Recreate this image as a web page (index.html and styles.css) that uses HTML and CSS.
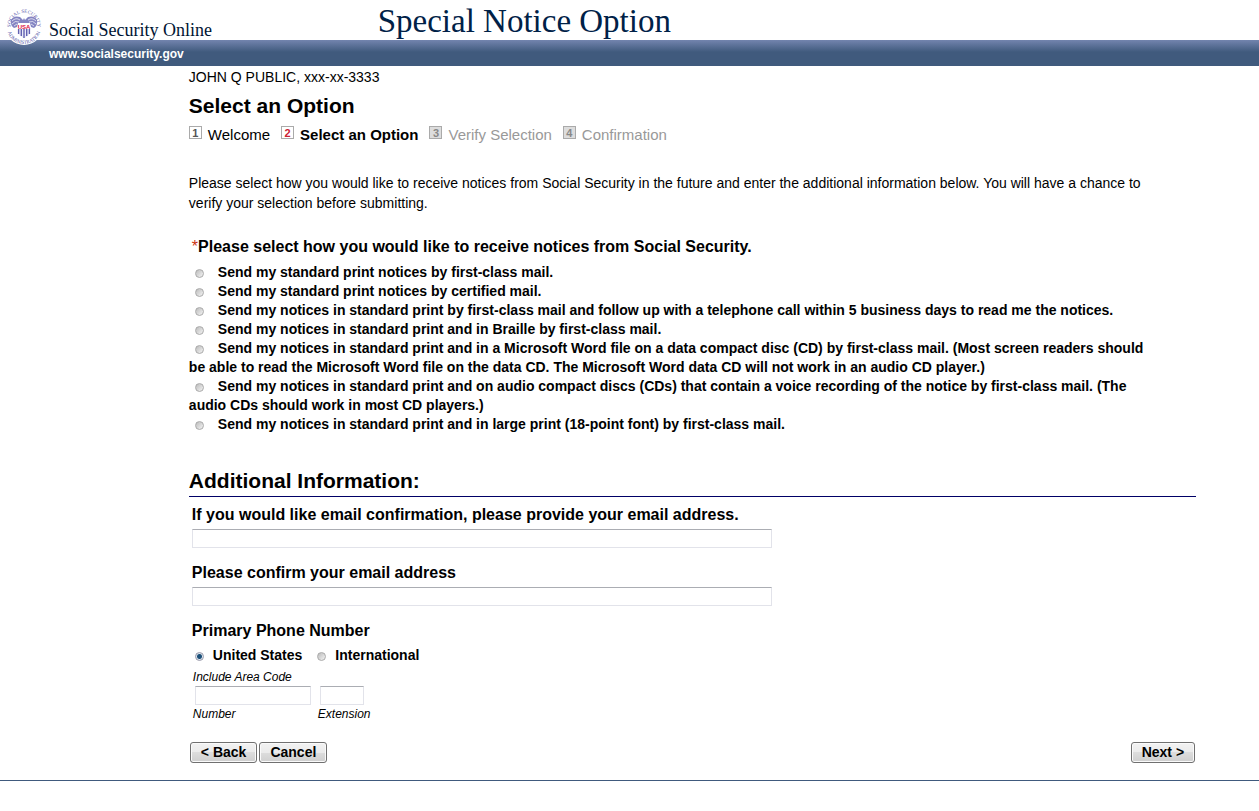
FILE: index.html
```html
<!DOCTYPE html>
<html lang="en">
    <head>
        <meta charset="utf-8">
        <title>Special Notice Option</title>
        <link rel="stylesheet" href="styles.css">
    </head>
    <body>
        <header class="header">
            <svg class="seal" viewBox="0 0 38 38" aria-hidden="true">
                <defs>
                    <path id="arc-top" d="M5.6 21 A13.5 13.5 0 1 1 32.4 21"/>
                    <path id="arc-bottom" d="M2 20 A17 17 0 0 0 36 20"/>
                </defs>
                <circle cx="19" cy="19" r="19" fill="#fff"/>
                <text class="seal-ring"><textPath href="#arc-top" startOffset="50%" text-anchor="middle">SOCIAL SECURITY</textPath></text>
                <text class="seal-ring"><textPath href="#arc-bottom" startOffset="50%" text-anchor="middle">ADMINISTRATION</textPath></text>
                <path d="M6 13 Q9 8 15 10 L18 13 L19 11 L20 13 L23 10 Q29 8 32 13 Q33 18 29 21 L26 20 L25 16 H13 L12 20 L9 21 Q5 18 6 13Z" fill="#8484c2"/>
                <path d="M7 14 Q11 10 15 13 M7 17 Q10 13 14 15 M9 19 L12 17 M31 14 Q27 10 23 13 M31 17 Q28 13 24 15 M29 19 L26 17" fill="none" stroke="#fff" stroke-width="0.7"/>
                <path d="M13 22 H25 V26 Q24 29 19 31 Q14 29 13 26Z" fill="#ececf8"/>
                <path d="M13.6 22 V27 M16.3 22 V29 M19 22 V31 M21.7 22 V29 M24.4 22 V27" stroke="#6262b2" stroke-width="1.4"/>
                <text class="seal-usa" x="19" y="21.5" text-anchor="middle">USA</text>
            </svg>
            <div class="header-top">
                <span class="site-name">Social Security Online</span>
                <h1 class="app-title">Special Notice Option</h1>
            </div>
            <div class="header-bar">
                <a href="#">www.socialsecurity.gov</a>
            </div>
        </header>

        <main class="content">
            <p class="user">JOHN Q PUBLIC, xxx-xx-3333</p>
            <h2 class="page-title">Select an Option</h2>
            <ol class="steps">
                <li class="step"><span class="step-number">1</span>Welcome</li>
                <li class="step current"><span class="step-number">2</span>Select an Option</li>
                <li class="step pending"><span class="step-number">3</span>Verify Selection</li>
                <li class="step pending"><span class="step-number">4</span>Confirmation</li>
            </ol>
            <p class="intro">Please select how you would like to receive notices from Social Security in the future and enter the additional information below. You will have a chance to verify your selection before submitting.</p>

            <form name="notice" id="form">
                <fieldset class="options">
                    <legend class="question"><span class="required">*</span>Please select how you would like to receive notices from Social Security.</legend>
                    <label class="option"><input type="radio" name="option" value="first-class">Send my standard print notices by first-class mail.</label>
                    <label class="option"><input type="radio" name="option" value="certified">Send my standard print notices by certified mail.</label>
                    <label class="option"><input type="radio" name="option" value="phone">Send my notices in standard print by first-class mail and follow up with a telephone call within 5 business days to read me the notices.</label>
                    <label class="option"><input type="radio" name="option" value="braille">Send my notices in standard print and in Braille by first-class mail.</label>
                    <label class="option"><input type="radio" name="option" value="data-cd">Send my notices in standard print and in a Microsoft Word file on a data compact disc (CD) by first-class mail. (Most screen readers should be able to read the Microsoft Word file on the data CD. The Microsoft Word data CD will not work in an audio CD player.)</label>
                    <label class="option"><input type="radio" name="option" value="audio-cd">Send my notices in standard print and on audio compact discs (CDs) that contain a voice recording of the notice by first-class mail. (The audio CDs should work in most CD players.)</label>
                    <label class="option"><input type="radio" name="option" value="large-print">Send my notices in standard print and in large print (18-point font) by first-class mail.</label>
                </fieldset>

                <h2 class="section-title">Additional Information:</h2>
                <div class="field">
                    <label class="question" for="email">If you would like email confirmation, please provide your email address.</label>
                    <input type="email" id="email" name="email">
                </div>
                <div class="field">
                    <label class="question" for="confirm">Please confirm your email address</label>
                    <input type="email" id="confirm" name="confirm">
                </div>
                <fieldset class="phone">
                    <legend class="question">Primary Phone Number</legend>
                    <div class="phone-type">
                        <label><input type="radio" name="country" value="us" checked>United States</label>
                        <label><input type="radio" name="country" value="intl">International</label>
                    </div>
                    <div class="hint">Include Area Code</div>
                    <div class="phone-row">
                        <div class="phone-number">
                            <input type="tel" id="number" name="number">
                            <label class="hint" for="number">Number</label>
                        </div>
                        <div class="phone-ext">
                            <input type="tel" id="extension" name="extension">
                            <label class="hint" for="extension">Extension</label>
                        </div>
                    </div>
                </fieldset>
                <div class="buttons">
                    <button class="button" type="button">&lt; Back</button>
                    <button class="button" type="button">Cancel</button>
                    <button class="button next" type="submit">Next &gt;</button>
                </div>
            </form>
        </main>
        <footer class="footer"></footer>
    </body>
</html>
```
FILE: styles.css
```css
* {
    box-sizing: border-box;
}
body {
    margin: 0;
    background-color: #FFF;
    color: #000;
    font-family: "Liberation Sans", Arial, sans-serif;
    font-size: 15px;
}
.header {
    position: relative;
}
.seal {
    position: absolute;
    top: 7px;
    left: 5px;
    width: 38px;
    height: 38px;
}
.seal-ring {
    font-family: "Liberation Serif", serif;
    font-size: 5px;
    fill: #5555a8;
}
.seal-usa {
    font-size: 6px;
    font-weight: bold;
    fill: #dd1144;
}
.header-top {
    display: flex;
    align-items: flex-end;
    height: 40px;
    font-family: Georgia, "Liberation Serif", serif;
    color: #002147;
}
.site-name {
    width: 30%;
    padding-left: 49px;
    font-size: 18px;
    line-height: 20px;
    color: #001433;
}
.app-title {
    margin: 0;
    font-size: 33px;
    line-height: 38px;
    font-weight: normal;
}
.header-bar {
    height: 26px;
    padding-left: 49px;
    background: linear-gradient(#7384ae, #405a7d 12px);
    font-size: 12px;
    font-weight: bold;
    line-height: 28px;
}
.header-bar a {
    color: #FFF;
    text-decoration: none;
}
.content {
    margin: 0 5% 0 15%;
}
.user {
    margin: 0;
    padding-top: 2px;
    font-size: 14px;
    line-height: 18px;
}
.page-title, .section-title {
    margin: 0;
    font-size: 21px;
    line-height: 24px;
}
.page-title {
    padding-top: 8px;
}
.steps {
    display: flex;
    gap: 11px;
    margin: 0;
    padding: 8px 0 0;
    list-style: none;
    line-height: 18px;
}
.step {
    display: flex;
    gap: 6px;
}
.step-number {
    width: 13px;
    height: 13px;
    border: 1px solid #aaa;
    background-color: #FFF;
    color: #555;
    font-size: 11px;
    font-weight: bold;
    line-height: 12px;
    text-align: center;
}
.current {
    font-weight: bold;
}
.current .step-number {
    color: #cc2233;
}
.pending {
    color: #999;
}
.pending .step-number {
    background-color: #ddd;
    color: #888;
}
.intro {
    margin: 29px 0 24px;
    padding-right: 30px;
    font-size: 14px;
    line-height: 20px;
}
fieldset {
    margin: 0;
    padding: 0;
    border: none;
}
.question {
    display: block;
    padding: 0 3px;
    font-size: 16px;
    font-weight: bold;
    line-height: 20px;
}
.required {
    color: #cc3311;
    font-weight: normal;
}
.options .question {
    margin-bottom: 6px;
}
.option {
    display: block;
    padding-right: 45px;
    font-size: 14px;
    font-weight: bold;
    line-height: 19px;
}
input[type=radio] {
    appearance: none;
    width: 9px;
    height: 9px;
    margin: 0 14px 0 6px;
    border: 1px solid #aaa;
    border-radius: 50%;
    background: linear-gradient(135deg, #bbb, #f4f4f4);
    vertical-align: -1px;
}
input[type=radio]:checked {
    border-color: #99a;
    background: radial-gradient(#1c4f78 2px, #dde6ee 3px);
}
.section-title {
    margin-top: 35px;
    margin-bottom: 8px;
    padding-bottom: 3px;
    border-bottom: 1px solid #000066;
}
.field {
    margin-bottom: 15px;
}
input[type=email], input[type=tel] {
    display: block;
    height: 19px;
    padding: 0 3px;
    border: 1px solid #e2e3ea;
    border-top-color: #abadb3;
    background-color: #FFF;
}
input[type=email] {
    width: 580px;
    max-width: 100%;
    margin: 4px 3px 0;
}
.phone-type {
    display: flex;
    gap: 15px;
    padding: 4px 0 3px;
    font-size: 14px;
    font-weight: bold;
    line-height: 20px;
}
.phone-type input[type=radio] {
    margin-right: 9px;
}
.phone-type label + label input[type=radio] {
    margin-left: 0;
}
.hint {
    display: block;
    padding-left: 4px;
    font-size: 12px;
    font-style: italic;
    line-height: 18px;
}
.phone-row {
    display: flex;
}
.phone-row input[type=tel] {
    margin-left: 6px;
}
.phone-number {
    width: 125px;
}
.phone-number input[type=tel] {
    width: 116px;
}
.phone-ext input[type=tel] {
    width: 44px;
}
.buttons {
    display: flex;
    gap: 2px;
    padding: 19px 1px 17px;
}
.button {
    height: 21px;
    padding: 0 10px;
    border: 1px solid #707070;
    border-radius: 3px;
    background: linear-gradient(#f2f2f2, #ebebeb 50%, #dddddd 50%, #cfcfcf);
    box-shadow: inset 0 0 0 1px #fafafa;
    color: #000;
    font-family: inherit;
    font-size: 14px;
    font-weight: bold;
    line-height: 19px;
    cursor: pointer;
}
.next {
    margin-left: auto;
}
.footer {
    border-top: 1px solid #405a7d;
}
```
